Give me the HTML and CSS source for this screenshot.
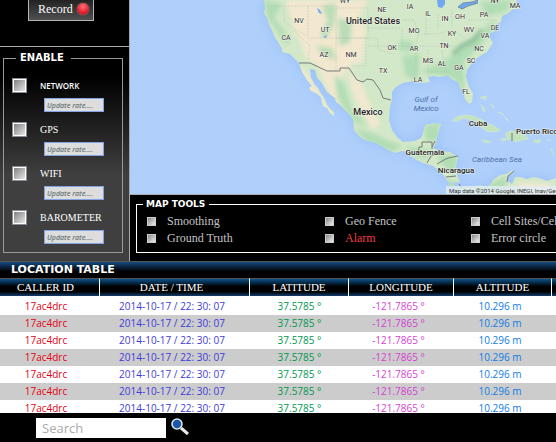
FILE: index.html
```html
<!DOCTYPE html>
<html lang="en">
<head>
<meta charset="utf-8">
<title>Location tracker</title>
<link rel="stylesheet" href="styles.css">
</head>
<body>
<main class="top">
  <aside class="side">
    <div class="record-bar"><button class="record" type="button">Record <span class="dot"></span></button></div>
    <div class="enable-panel">
      <fieldset class="enable">
        <legend>ENABLE</legend>
        <div class="sources">
          <div class="source">
            <input class="tick" type="checkbox" id="network"><label class="strong" for="network">NETWORK</label>
            <input class="rate" type="text" placeholder="Update rate...." aria-label="Network update rate">
          </div>
          <div class="source">
            <input class="tick" type="checkbox" id="gps"><label for="gps">GPS</label>
            <input class="rate" type="text" placeholder="Update rate...." aria-label="GPS update rate">
          </div>
          <div class="source">
            <input class="tick" type="checkbox" id="wifi"><label for="wifi">WIFI</label>
            <input class="rate" type="text" placeholder="Update rate...." aria-label="WIFI update rate">
          </div>
          <div class="source">
            <input class="tick" type="checkbox" id="baro"><label for="baro">BAROMETER</label>
            <input class="rate" type="text" placeholder="Update rate...." aria-label="Barometer update rate">
          </div>
        </div>
      </fieldset>
    </div>
  </aside>
  <section class="content">
    <svg class="map" viewBox="0 0 426 194" preserveAspectRatio="xMinYMin slice" role="img" aria-label="Map of North and Central America">
      <defs>
        <path id="land" d="M134 0L135 8 134 13 137 18 139 25 143 32 144 36 148 42 152 49 152 52 160 54 165 59 169 63 172 72 177 80 182 86 179 88 181 91 186 93 191 97 193 106 197 108 200 113 204 116 204 112 200 109 197 105 194 98 190 92 188 88 185 85 181 78 180 69 185 70 187 78 192 83 194 87 197 92 205 98 206 102 210 105 220 115 223 120 224 130 229 136 235 140 243 142 250 145 258 150 265 153 272 151 277 152 282 157 287 160 293 163 303 166 310 171 315 177 318 182 323 184 328 188 334 186 343 187 350 185 356 187 361 184 363 180 370 175 377 174 382 170 384 171 378 176 378 181 382 184 385 177 390 177 397 179 404 177 412 179 417 181 426 178V194H336L327 190 318 184 330 182 327 175 326 167 328 157 320 152 310 151 303 148 306 143 308 134 311 124 305 123 295 125 293 133 291 138 285 141 273 142 267 137 262 130 259 120 260 107 262 100 262 92 266 87 273 83 283 81 288 82 292 83 300 82 298 77 304 76 310 77 318 76 323 80 328 82 330 88 333 91 335 99 339 104 342 102 343 93 339 87 336 77 337 70 342 63 347 58 352 55 357 52 363 43 360 38 360 33 364 32 367 24 371 22 372 16 377 14 383 9 389 9 390 6 386 3 387 0Z"/>
        <clipPath id="landClip"><use href="#land"/></clipPath>
        <filter id="soft" x="-20%" y="-20%" width="140%" height="140%"><feGaussianBlur stdDeviation="2"/></filter>
        <filter id="shore" x="-20%" y="-20%" width="140%" height="140%"><feGaussianBlur stdDeviation="7"/></filter>
      </defs>
      <rect class="sea" width="426" height="194"/>
      <use class="shelf" href="#land" filter="url(#shore)"/>
      <use class="land" href="#land"/>
      <g clip-path="url(#landClip)">
        <g class="sand" filter="url(#soft)">
          <path d="M154 0L160 12 164 32 170 40 176 58 188 66 200 96 212 104 206 84 220 66 228 52 224 24 216 0Z"/>
          <path d="M170 62L206 118 200 118 175 84ZM218 70L232 84 240 105 250 124 243 130 230 110 222 90Z"/>
          <path d="M212 0H238L228 18 236 28 232 62 216 66ZM388 182L420 184V194H390Z"/>
        </g>
        <g class="forest" filter="url(#soft)">
          <path d="M134 0L152 4 144 18 152 28 160 42 156 44 144 26 138 20ZM192 6L206 4 204 24 196 38 190 36 198 20ZM208 18L222 22 220 42 210 46ZM186 46L202 48 206 60 194 56Z"/>
          <path d="M204 74L214 84 222 110 238 126 224 122 208 98ZM224 128L240 132 256 140 272 146 262 152 240 144ZM294 126L310 122 308 142 296 140ZM276 146L300 150 296 160 284 156ZM306 154L328 156 324 174 314 166ZM314 178L340 188 360 184 376 176V194H320Z"/>
          <path d="M272 56L290 54 288 80 276 76ZM290 72L316 60 332 48 350 34 362 20 366 26 350 46 334 62 334 96 324 78ZM270 40L284 42 280 52 268 50ZM350 2L382 0 376 12 356 16Z"/>
        </g>
        <path class="ridge" d="M323 54L332 46 344 40 352 30" filter="url(#soft)"/>
        <path class="state" d="M134 6H178V36L166 30 154 22V6M178 6H206V38M178 38H238V8H206M206 38V70M164 31L180 46 178 60M238 18H266M238 28H272V46H238M206 38H236V66H222M236 38H248V50L264 54M272 46H286V76M272 20H284L288 34 286 46M296 18V36M308 14V30M322 10V26M288 34L306 34 324 30M286 46H330L352 44M298 50V76M312 50L316 72M298 72H320M338 20H368M324 30L334 38 346 28"/>
      </g>
      <g class="lake"><path d="M307 0H315V4L312 8 308 7ZM328 7L333 3 342 2 348 0 348 3 338 6 332 9ZM187 8L190 10 192 14 189 13ZM193 37L197 35 196 38Z"/></g>
      <path class="lakeshore" d="M328 7L333 3 342 2 348 0M348 3L338 6 332 9 328 7"/>
      <g class="isle">
        <path d="M322 121L327 117 334 115 343 116 350 119 357 123 364 126 370 130 366 132 356 131 350 126 342 120 334 118 327 121Z"/>
        <path d="M371 139L378 138 375 134 380 131 388 132 395 135 398 139 391 140 386 142 380 139 372 141ZM404 140L411 140 409 143 404 142ZM352 140L359 141 361 143 354 142ZM351 97L356 96 355 100ZM352 106L355 109 354 112ZM361 104L364 108ZM368 112L373 114ZM375 117L378 121ZM164 83L165 84Z"/>
        <path d="M350 98L357 97M351 104L354 112M360 103L364 107M367 112L374 115M375 117L377 120M417 141L421 140M421 148L424 156"/>
      </g>
      <path class="border" d="M169 63H180L197 71H210V68H219L227 80 233 82 237 79 243 80 250 90 253 98 261 100M292 142H302V149M292 142V147H289L288 155M302 147L305 141M297 163L301 156 314 151M307 164L314 160 318 158 328 156M316 177L326 176M329 184L332 188M382 133V141M384 171L378 176 377 182"/>
      <g class="names">
        <text x="169" y="23">NV</text><text x="156" y="40">CA</text><text x="195" y="32">UT</text><text x="194" y="57">AZ</text><text x="215" y="3">WY</text>
        <text x="221" y="57">NM</text><text x="252" y="12">NE</text><text x="280" y="9">IA</text><text x="298" y="16">IL</text><text x="315" y="21">IN</text>
        <text x="330" y="19">OH</text><text x="354" y="17">PA</text><text x="365" y="3">NY</text><text x="385" y="8">MA</text><text x="284" y="33">MO</text>
        <text x="322" y="36">KY</text><text x="339" y="32">WV</text><text x="365" y="30">DE</text><text x="355" y="38">VA</text><text x="262" y="50">OK</text>
        <text x="284" y="51">AR</text><text x="314" y="48">TN</text><text x="349" y="51">NC</text><text x="298" y="63">MS</text><text x="312" y="66">AL</text>
        <text x="329" y="70">GA</text><text x="341" y="63">SC</text><text x="253" y="73">TX</text><text x="288" y="82">LA</text><text x="336" y="94">FL</text>
      </g>
      <g class="names places">
        <text class="large" x="243" y="24">United States</text><text class="large" x="238" y="115">Mexico</text>
        <text x="348" y="126">Cuba</text><text x="407" y="134">Puerto Rico</text><text x="295" y="155">Guatemala</text><text x="326" y="173">Nicaragua</text>
      </g>
      <g class="water"><text x="296" y="102">Gulf of</text><text x="296" y="111">Mexico</text><text x="367" y="162">Caribbean Sea</text></g>
      <rect class="credit-bg" x="316" y="186" width="110" height="8"/>
      <text class="credit" x="319" y="193">Map data ©2014 Google, INEGI, Inav/Geos</text>
    </svg>
    <div class="tools-panel">
      <fieldset class="tools">
        <legend>MAP TOOLS</legend>
        <div class="tool-grid">
          <label><input class="mini" type="checkbox">Smoothing</label>
          <label><input class="mini" type="checkbox">Geo Fence</label>
          <label><input class="mini" type="checkbox">Cell Sites/Cell</label>
          <label><input class="mini" type="checkbox">Ground Truth</label>
          <label class="alarm"><input class="mini" type="checkbox">Alarm</label>
          <label><input class="mini" type="checkbox">Error circle</label>
        </div>
      </fieldset>
    </div>
  </section>
</main>
<section class="locations">
  <h2>LOCATION TABLE</h2>
  <table>
    <colgroup><col class="c-id"><col class="c-date"><col class="c-lat"><col class="c-lon"><col class="c-alt"><col></colgroup>
    <thead><tr><th>CALLER ID</th><th>DATE / TIME</th><th>LATITUDE</th><th>LONGITUDE</th><th>ALTITUDE</th><th></th></tr></thead>
    <tbody>
      <tr><td>17ac4drc</td><td>2014-10-17 / 22: 30: 07</td><td>37.5785 °</td><td>-121.7865 °</td><td>10.296 m</td><td></td></tr>
      <tr><td>17ac4drc</td><td>2014-10-17 / 22: 30: 07</td><td>37.5785 °</td><td>-121.7865 °</td><td>10.296 m</td><td></td></tr>
      <tr><td>17ac4drc</td><td>2014-10-17 / 22: 30: 07</td><td>37.5785 °</td><td>-121.7865 °</td><td>10.296 m</td><td></td></tr>
      <tr><td>17ac4drc</td><td>2014-10-17 / 22: 30: 07</td><td>37.5785 °</td><td>-121.7865 °</td><td>10.296 m</td><td></td></tr>
      <tr><td>17ac4drc</td><td>2014-10-17 / 22: 30: 07</td><td>37.5785 °</td><td>-121.7865 °</td><td>10.296 m</td><td></td></tr>
      <tr><td>17ac4drc</td><td>2014-10-17 / 22: 30: 07</td><td>37.5785 °</td><td>-121.7865 °</td><td>10.296 m</td><td></td></tr>
      <tr><td>17ac4drc</td><td>2014-10-17 / 22: 30: 07</td><td>37.5785 °</td><td>-121.7865 °</td><td>10.296 m</td><td></td></tr>
    </tbody>
  </table>
</section>
<footer class="search-bar">
  <input class="search" type="search" placeholder="Search" aria-label="Search">
  <button class="go" type="button" aria-label="Run search">
    <svg viewBox="0 0 20 18"><path d="M11 10L18 16" stroke="#e8e8e8" stroke-width="3"/><circle cx="7" cy="6" r="5" fill="#1c57a5" stroke="#dde3ea" stroke-width="1.6"/></svg>
  </button>
</footer>
</body>
</html>
```
FILE: styles.css
```css
* { box-sizing: border-box; }
body {
  margin: 0;
  height: 100vh;
  display: flex;
  flex-direction: column;
  overflow: hidden;
  background: #000;
  color: #fff;
  font-family: "Liberation Serif", serif;
}
fieldset { margin: 0; min-width: 0; }
legend { font: bold 10px/12px "DejaVu Sans", sans-serif; }

.top { display: grid; grid-template-columns: 130px minmax(0, 1fr); flex: none; }
.side { display: flex; flex-direction: column; border-right: 1px solid #a5a5a5; }
.record-bar { height: 47px; padding-left: 28px; border-bottom: 1px solid #aaa; }
.record {
  display: flex;
  align-items: center;
  gap: 4px;
  height: 21px;
  padding: 0 4px 2px 9px;
  border: 1px solid #b5b5b5;
  border-top: 0;
  background: linear-gradient(#222, #505050);
  color: #fff;
  font: 12px/16px "Liberation Serif", serif;
}
.dot {
  width: 12px;
  height: 12px;
  border-radius: 50%;
  background: radial-gradient(circle at 50% 30%, #ff7078, #e01f2e 60%, #b01520);
  box-shadow: 0 0 1px #ddd;
}
.enable-panel { flex: 1; padding: 5px 6px 8px 3px; background: linear-gradient(#000 14%, #3f3f3f 60%); }
.enable { height: 100%; padding: 0 0 0 8px; border: 1px solid #999; }
.enable legend { margin-left: 4px; padding: 0 7px 0 4px; }
.sources { display: grid; gap: 10px; padding-top: 14px; }
.source { display: grid; grid-template-columns: 28px 1fr; row-gap: 5px; align-items: center; }
.source label { font-size: 10px; line-height: 15px; }
.source .strong { font: 600 8px/15px "Open Sans", sans-serif; }
.tick {
  appearance: none;
  width: 15px;
  height: 15px;
  margin: 0;
  border: 1px solid #8b8b95;
  background: linear-gradient(135deg, #777, #eee);
  box-shadow: inset 0 0 0 1px #fff;
}
.rate {
  grid-column: 1 / -1;
  width: 60px;
  height: 14px;
  margin: 0 0 0 32px;
  padding: 0 2px;
  border: 1px solid #83a3e8;
  background: #ddd;
  font: italic 600 7px/12px "Open Sans", sans-serif;
}
.rate::placeholder { color: #6c7676; opacity: 1; }

.content { min-width: 0; }
.map { display: block; width: 100%; height: 195px; border-bottom: 1px solid #aaa; }
.sea { fill: #b0d0fb; }
.shelf { fill: #8fbaf8; opacity: .75; }
.land { fill: #d3e8c8; }
.sand { fill: #f2e8cf; }
.forest { fill: #a6d9ae; opacity: .75; }
.ridge { fill: none; stroke: #86ba95; stroke-width: 4; }
.state { fill: none; stroke: #b5bcae; stroke-width: .6; stroke-dasharray: 2 1; opacity: .7; }
.lake { fill: #6fa7f2; }
.lakeshore { fill: none; stroke: #66727c; stroke-width: .7; }
.isle { fill: #c2e3bd; stroke: #cbe7cf; stroke-width: .8; }
.border { fill: none; stroke: #777b78; stroke-width: 1; }
.names, .water { font: 400 7px Roboto, sans-serif; text-anchor: middle; }
.names { fill: #2c2e2c; stroke: #f7f8f0; stroke-width: 1.2; stroke-opacity: .8; paint-order: stroke; stroke-linejoin: round; }
.places { font-size: 8px; font-weight: 500; fill: #222; }
.large { font-size: 9px; }
.water { font-size: 8px; font-style: italic; fill: #4d70a8; }
.credit-bg { fill: #e2ebf5; opacity: .8; }
.credit { font: 6px Roboto, sans-serif; fill: #333; }

.tools-panel { padding: 3px 0 8px 6px; }
.tools { padding: 0 0 4px 10px; border: 1px solid #fff; border-right: 0; height: 55px; overflow: hidden; }
.tools legend { margin-left: -4px; padding: 0 4px 0 3px; font-size: 9px; }
.tool-grid { display: grid; grid-template-columns: 178px 146px minmax(0, 1fr); padding-top: 3px; }
.tool-grid label { display: flex; align-items: center; gap: 11px; font-size: 12px; line-height: 17px; color: #c4c4c4; white-space: nowrap; }
.tool-grid .alarm { color: #f03a42; }
.mini {
  appearance: none;
  flex: none;
  width: 9px;
  height: 9px;
  margin: 0;
  border: 1px solid #ccc;
  background: linear-gradient(135deg, #888, #eee);
}

.locations { flex: 1; min-height: 0; overflow: hidden; background: #fff; }
h2 {
  margin: 0;
  padding-left: 11px;
  border-top: 1px solid #555;
  background: linear-gradient(#164a80, #000 60%);
  font: bold 11px/16px "DejaVu Sans", sans-serif;
}
table { width: 100%; table-layout: fixed; border-collapse: separate; border-spacing: 0; }
.c-id { width: 100px; }
.c-date { width: 150px; }
.c-lat { width: 99px; }
.c-lon { width: 105px; }
.c-alt { width: 98px; }
th {
  height: 18px;
  padding: 0;
  border-top: 1px solid #555;
  border-right: 1px solid #fff;
  background: linear-gradient(#0d5189, #000 45%, #000 75%, #123f70);
  font: 11px/17px "Liberation Serif", serif;
  white-space: nowrap;
}
th:last-child { border-right: 0; }
td { height: 17px; padding: 0; font: 10px/17px "Open Sans", sans-serif; text-align: center; white-space: nowrap; }
tbody tr:first-child td { height: 19px; padding-top: 2px; }
tbody tr:nth-child(even) { background: #ccc; }
th:nth-child(1), td:nth-child(1) { padding-right: 8px; color: #e60012; }
th:nth-child(2), td:nth-child(2) { padding-right: 6px; color: #403bdc; }
td:nth-child(3) { color: #009a50; }
td:nth-child(4) { padding-right: 6px; color: #d63fd3; }
td:nth-child(5) { padding-right: 6px; color: #0f7de6; }
thead th:nth-child(n) { color: #fff; }

.search-bar { display: flex; flex: none; gap: 4px; height: 29px; padding: 5px 0 4px 36px; }
.search {
  appearance: none;
  width: 130px;
  height: 20px;
  margin: 0;
  padding: 0 6px;
  border: 0;
  border-radius: 0;
  background: #fff;
  font: 13px/20px "Open Sans", sans-serif;
}
.search::placeholder { color: #aaa; opacity: 1; }
.go { width: 20px; height: 18px; padding: 0; border: 0; background: none; }
.go svg { display: block; width: 20px; height: 18px; fill: none; }
```
